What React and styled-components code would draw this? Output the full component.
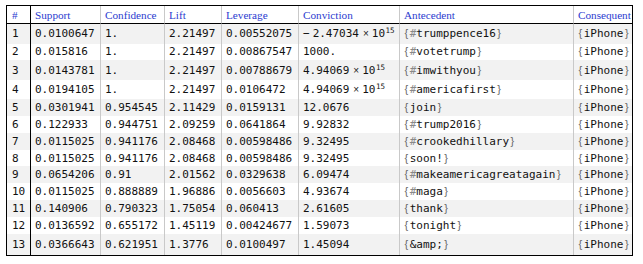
import React from "react";
import styled, { createGlobalStyle } from "styled-components";

const GlobalStyle = createGlobalStyle`
  html, body {
    margin: 0;
    padding: 0;
    background: #fff;
  }
`;

const columns = [
  { key: "n", label: "#", width: 23 },
  { key: "support", label: "Support", width: 70 },
  { key: "confidence", label: "Confidence", width: 64 },
  { key: "lift", label: "Lift", width: 57 },
  { key: "leverage", label: "Leverage", width: 77 },
  { key: "conviction", label: "Conviction", width: 101 },
  { key: "antecedent", label: "Antecedent", width: 174 },
  { key: "consequent", label: "Consequent", width: 59 },
];

// conviction is either a plain string or { neg, m, e } for m × 10^e
const rules = [
  ["0.0100647", "1.", "2.21497", "0.00552075", { neg: true, m: "2.47034", e: "15" }, "#trumppence16"],
  ["0.015816", "1.", "2.21497", "0.00867547", "1000.", "#votetrump"],
  ["0.0143781", "1.", "2.21497", "0.00788679", { m: "4.94069", e: "15" }, "#imwithyou"],
  ["0.0194105", "1.", "2.21497", "0.0106472", { m: "4.94069", e: "15" }, "#americafirst"],
  ["0.0301941", "0.954545", "2.11429", "0.0159131", "12.0676", "join"],
  ["0.122933", "0.944751", "2.09259", "0.0641864", "9.92832", "#trump2016"],
  ["0.0115025", "0.941176", "2.08468", "0.00598486", "9.32495", "#crookedhillary"],
  ["0.0115025", "0.941176", "2.08468", "0.00598486", "9.32495", "soon!"],
  ["0.0654206", "0.91", "2.01562", "0.0329638", "6.09474", "#makeamericagreatagain"],
  ["0.0115025", "0.888889", "1.96886", "0.0056603", "4.93674", "#maga"],
  ["0.140906", "0.790323", "1.75054", "0.060413", "2.61605", "thank"],
  ["0.0136592", "0.655172", "1.45119", "0.00424677", "1.59073", "tonight"],
  ["0.0366643", "0.621951", "1.3776", "0.0100497", "1.45094", "&amp;"],
];

const rowHeights = { sup: 19.5, last: 21, normal: 16.8 };

function rowKind(conviction, index) {
  if (index === rules.length - 1) return "last";
  if (typeof conviction === "object") return "sup";
  return "normal";
}

function Sci({ value }) {
  if (typeof value === "string") return value;
  return (
    <>
      {value.neg && <Minus>−</Minus>}
      {value.m}
      <Times>×</Times>
      10
      <Sup>{value.e}</Sup>
    </>
  );
}

function Word({ text }) {
  if (!text.startsWith("#")) return text;
  return (
    <>
      <Hash>#</Hash>
      {text.slice(1)}
    </>
  );
}

function Set({ children }) {
  return (
    <>
      <Brace $open>{"{"}</Brace>
      {children}
      <Brace>{"}"}</Brace>
    </>
  );
}

function borderFor(index) {
  if (index === 0) return "none";
  if (index === 1) return "1px solid #000";
  return "1px solid #c9c9c9";
}

export default function App() {
  return (
    <>
      <GlobalStyle />
      <Table>
        <thead>
          <tr>
            {columns.map((col, i) => (
              <HeadCell key={col.key} $w={col.width} $lead={i === 0} $border={borderFor(i)}>
                {col.label}
              </HeadCell>
            ))}
          </tr>
        </thead>
        <tbody>
          {rules.map((r, idx) => {
            const [support, confidence, lift, leverage, conviction, antecedent] = r;
            const cells = [
              String(idx + 1),
              support,
              confidence,
              lift,
              leverage,
              <Sci value={conviction} />,
              <Set>
                <Word text={antecedent} />
              </Set>,
              <Set>iPhone</Set>,
            ];
            return (
              <Row key={idx} $odd={idx % 2 === 0} $h={rowHeights[rowKind(conviction, idx)]}>
                {cells.map((c, i) => (
                  <Cell key={i} $lead={i === 0} $border={borderFor(i)}>
                    {c}
                  </Cell>
                ))}
              </Row>
            );
          })}
        </tbody>
      </Table>
    </>
  );
}

const Table = styled.table`
  box-sizing: border-box;
  margin: 5px 0 0 6px;
  width: 627px;
  border: 1px solid #000;
  border-collapse: separate;
  border-spacing: 0;
  table-layout: fixed;
  font-family: "DejaVu Sans Mono", monospace;
  font-size: 11px;
  color: #111;
`;

const HeadCell = styled.th`
  box-sizing: border-box;
  width: ${(p) => p.$w}px;
  height: 18px;
  padding: 0 0 0 ${(p) => (p.$lead ? 5 : 4)}px;
  border-left: ${(p) => p.$border};
  border-bottom: 1px solid #000;
  font-family: "Liberation Serif", serif;
  font-size: 11.2px;
  font-weight: normal;
  color: #2b3bcf;
  text-align: left;
  white-space: nowrap;
  overflow: hidden;
`;

const Row = styled.tr`
  height: ${(p) => p.$h}px;
  background: ${(p) => (p.$odd ? "#f2f2f2" : "#fff")};
`;

const Cell = styled.td`
  box-sizing: border-box;
  padding: 0 0 0 ${(p) => (p.$lead ? 5 : 4)}px;
  border-left: ${(p) => p.$border};
  line-height: 13px;
  vertical-align: middle;
  white-space: nowrap;
  overflow: hidden;
`;

const Minus = styled.span`
  margin-right: 3px;
`;

const Times = styled.span`
  font-family: "Liberation Sans", sans-serif;
  font-size: 10px;
  margin: 0 3px 0 4px;
  color: #222;
`;

const Sup = styled.sup`
  font-size: 7.5px;
  line-height: 1;
  vertical-align: 4px;
  margin-left: 0.5px;
`;

const Hash = styled.span`
  color: #888;
`;

const Brace = styled.span`
  font-family: "Liberation Sans", sans-serif;
  font-size: 11px;
  color: #666;
  margin: ${(p) => (p.$open ? "0 1.5px 0 0.5px" : "0 0.5px 0 1.5px")};
`;
